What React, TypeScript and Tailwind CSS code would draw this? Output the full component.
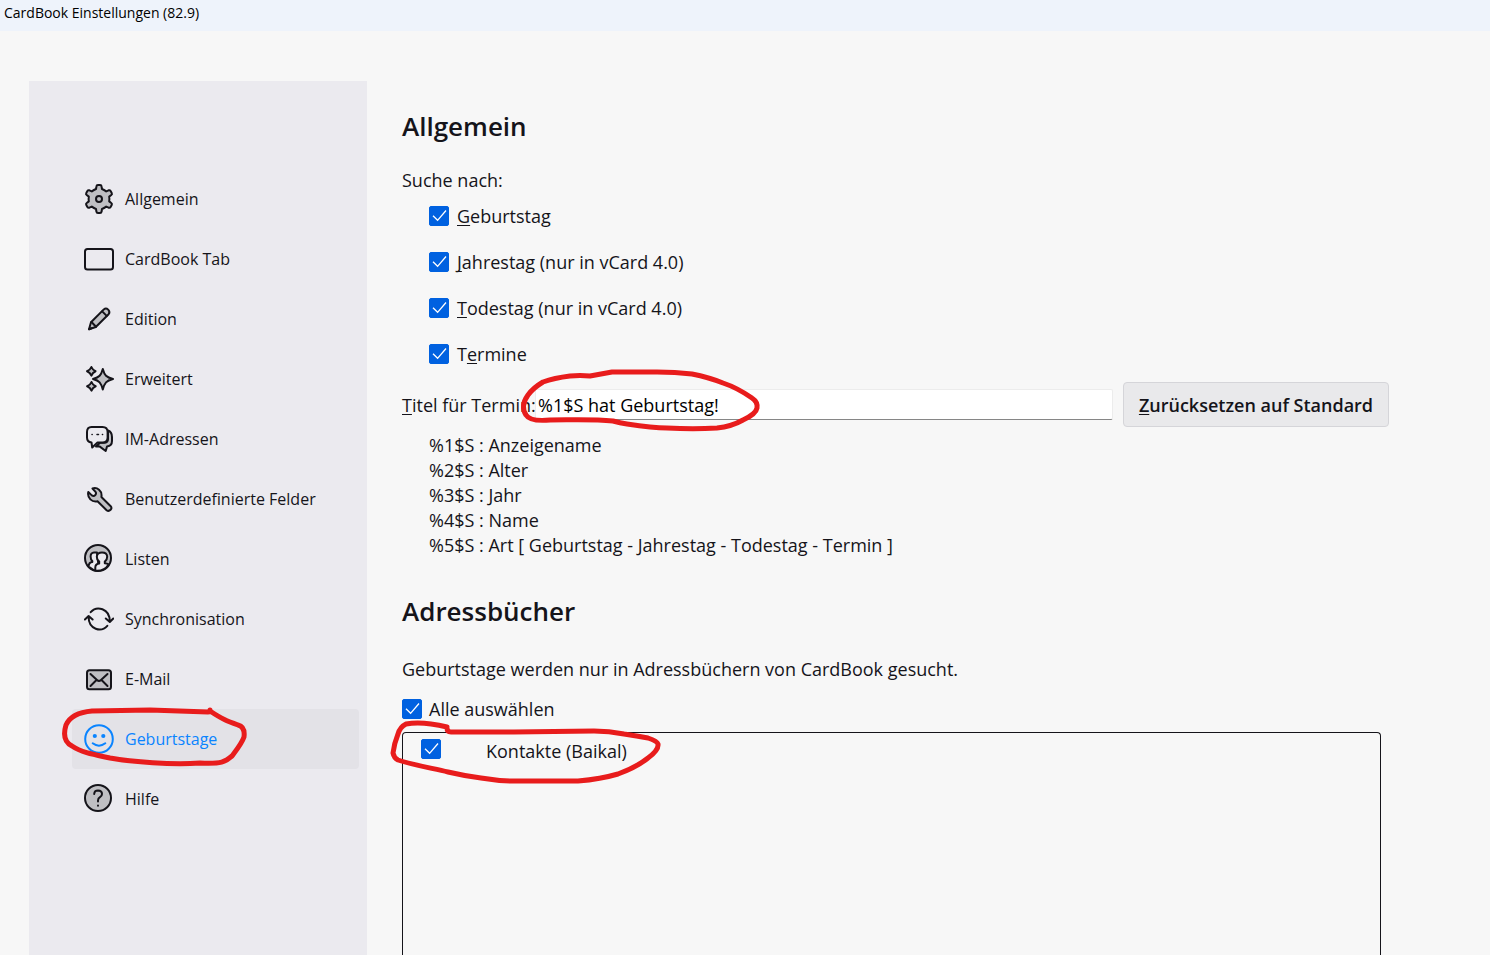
import { useState } from "react";
import type { ReactNode } from "react";

const FILL = "#bfbfc3";

const ICONS: Record<string, ReactNode> = {
  gear: (
    <>
      <path
        fill={FILL}
        d="M12 5L12.4 2.5Q12.6 1 14 1H16Q17.4 1 17.6 2.5L18 5Q20 5.8 22.2 7.4L24.6 6.3Q25.9 5.8 26.6 7L27.7 8.9Q28.4 10.2 27.3 11L25.2 12.6Q25.6 15 25.2 17.4L27.3 19Q28.4 19.8 27.7 21.1L26.6 23Q25.9 24.2 24.6 23.7L22.2 22.6Q20 24.3 18 25L17.6 27.5Q17.4 29 16 29H14Q12.6 29 12.4 27.5L12 25Q10 24.3 7.8 22.6L5.4 23.7Q4.1 24.2 3.4 23L2.3 21.1Q1.6 19.8 2.7 19L4.8 17.4Q4.4 15 4.8 12.6L2.7 11Q1.6 10.2 2.3 8.9L3.4 7Q4.1 5.8 5.4 6.3L7.8 7.4Q10 5.8 12 5Z"
      />
      <circle cx="15" cy="15" r="3" />
    </>
  ),
  tab: <rect x="1" y="5" width="28" height="20.5" rx="2.5" />,
  pencil: (
    <>
      <path fill={FILL} d="M5 25.2L7 18.2L19.8 5.4Q22 3.5 24.2 5.6Q26.4 7.9 24.6 10.2L11.8 23Z" />
      <path d="M7.5 18L12 22.7M18.2 7.4L22.7 11.9" />
      <path d="M5 25.2l2.5-1" />
    </>
  ),
  sparkle: (
    <>
      <path fill={FILL} d="M18.8 5C20.6 11.6 22.2 13.2 29 15C22.2 16.8 20.6 18.6 18.8 25.6C17 18.6 15.4 16.8 9 15C15.4 13.2 17 11.6 18.8 5Z" />
      <path fill={FILL} d="M7.4 3Q8.6 6 11.6 7.2Q8.6 8.4 7.4 11.6Q6.2 8.4 3 7.2Q6.2 6 7.4 3Z" />
      <path fill={FILL} d="M7.5 18Q8.7 21.1 11.7 22.3Q8.7 23.5 7.5 26.6Q6.3 23.5 3.1 22.3Q6.3 21.1 7.5 18Z" />
    </>
  ),
  chat: (
    <>
      <path fill={FILL} d="M24 6.5Q28 8 28 13V17Q28 21.8 23 22.6L21.7 27L15.5 22.4H12L16 18.8H20Q24 18.8 24 15Z" />
      <path fill="#ebeaef" d="M7.5 3H18.5Q23.6 3 23.6 8V13.5Q23.6 18.5 18.5 18.5H13.5L8.2 23.5L7.5 18.5Q3 18 3 13.5V8Q3 3 7.5 3Z" />
      <path strokeWidth="1.5" d="M8 10.5h.2M13 10.5h1.5M18.4 10.5h.2" />
    </>
  ),
  wrench: (
    <path
      fill={FILL}
      d="M8.5 4.5C13 3 18.5 6.5 17.4 13L26.7 22.2Q28.2 24 26.6 25.8Q24.6 27.8 22.6 26.2L13.5 17.3C8 18.5 3 14 4.3 8L7.8 11.4Q9.8 12.6 11.3 11Q12.6 9.5 11.5 7.8Z"
    />
  ),
  people: (
    <>
      <circle cx="14" cy="14" r="13" fill={FILL} />
      <path fill="#ebeaef" d="M4.6 22.5Q4.8 18.4 8.3 18V17Q6.6 15.6 6.6 12.6Q6.6 8.8 10 8.6H13L15 26L10 26.3Z" />
      <path
        fill="#ebeaef"
        d="M11.3 26.6V23.4Q11.3 20 15.2 19.4V17.6Q12.8 15.8 12.8 12.8Q13.2 8.6 18 8.6Q23 8.6 23.2 12.8Q23.2 15.8 20.8 17.6V19.2Q23 19.4 24.6 20.4Q20.5 27.4 11.3 26.6Z"
      />
    </>
  ),
  sync: (
    <>
      <path d="M6.7 8.2C12.5 1.5 25.8 4 25.8 17.6M21.8 14.5L25.8 18L29.3 14.5" />
      <path d="M23.3 21.8C17.5 28.5 4.4 26 4.6 12.5M.9 15.5L4.6 12L8.6 15.5" />
    </>
  ),
  mail: (
    <>
      <rect x="3" y="6.3" width="24" height="19" rx="2.5" fill={FILL} />
      <path d="M6.5 10L13 16Q15 17.8 17 16L23.5 10M6.5 22L12 16.5M23.5 22L18 16.5" />
    </>
  ),
  smile: (
    <>
      <circle cx="15" cy="15" r="13.8" />
      <circle cx="10.8" cy="12" r="1.1" fill="currentColor" />
      <circle cx="19.3" cy="12" r="1.1" fill="currentColor" />
      <path d="M8.7 19.3Q15 24 21.3 19.3" />
    </>
  ),
  help: (
    <>
      <circle cx="14" cy="14" r="13" fill={FILL} />
      <path d="M10.2 10Q10.4 6.6 14 6.6Q18 6.8 18 10Q18 12 16 13.2Q14 14.4 14 16.6V17.4M14 21.6v.2" />
    </>
  ),
};

const NAV_ITEMS = [
  { label: "Allgemein", icon: "gear" },
  { label: "CardBook Tab", icon: "tab" },
  { label: "Edition", icon: "pencil" },
  { label: "Erweitert", icon: "sparkle" },
  { label: "IM-Adressen", icon: "chat" },
  { label: "Benutzerdefinierte Felder", icon: "wrench" },
  { label: "Listen", icon: "people" },
  { label: "Synchronisation", icon: "sync" },
  { label: "E-Mail", icon: "mail" },
  { label: "Geburtstage", icon: "smile" },
  { label: "Hilfe", icon: "help" },
];

// before / key / after: "key" is the underlined access key
const SEARCH_OPTIONS = [
  { id: "birthday", before: "", accessKey: "G", after: "eburtstag" },
  { id: "anniversary", before: "", accessKey: "J", after: "ahrestag (nur in vCard 4.0)" },
  { id: "deathday", before: "", accessKey: "T", after: "odestag (nur in vCard 4.0)" },
  { id: "events", before: "T", accessKey: "e", after: "rmine" },
];

const PLACEHOLDERS = [
  "%1$S : Anzeigename",
  "%2$S : Alter",
  "%3$S : Jahr",
  "%4$S : Name",
  "%5$S : Art [ Geburtstag - Jahrestag - Todestag - Termin ]",
];

function Key({ children }: { children: ReactNode }) {
  return (
    <span className="underline decoration-1 underline-offset-2 [text-decoration-skip-ink:none]">{children}</span>
  );
}

// Hand drawn red marker, placed over its parent
function Marker({ d }: { d: string }) {
  return (
    <svg
      className="absolute left-0 top-0 z-10 w-full h-full overflow-visible pointer-events-none"
      fill="none"
      stroke="#e81c1c"
      strokeWidth="5"
      strokeLinecap="round"
      strokeLinejoin="round"
      aria-hidden="true"
    >
      <path d={d} />
    </svg>
  );
}

function Checkbox({ id }: { id: string }) {
  const [checked, setChecked] = useState(true);
  return (
    <span className="relative block w-5 h-5 shrink-0">
      <input
        id={id}
        type="checkbox"
        checked={checked}
        onChange={(e) => setChecked(e.target.checked)}
        className="block appearance-none w-5 h-5 rounded-xs border border-[#8f8f9d] bg-white checked:bg-[#0061e0] checked:border-[#0061e0]"
      />
      {checked && (
        <svg className="absolute inset-0 w-5 h-5 pointer-events-none" viewBox="0 0 20 20" fill="none">
          <path d="M4 9.7L8.6 14.3L17 4.5" stroke="#fff" strokeWidth="1.3" />
        </svg>
      )}
    </span>
  );
}

function Sidebar() {
  const [active, setActive] = useState("Geburtstage");
  return (
    <nav className="w-[338px] shrink-0 bg-[#ebeaef] pt-[88px] pl-[43px] pr-2">
      {NAV_ITEMS.map((item) => (
        <button
          key={item.label}
          type="button"
          onClick={() => setActive(item.label)}
          className={`relative w-full h-[60px] pl-3 flex items-center gap-[11px] rounded text-base text-left whitespace-nowrap ${
            active === item.label ? "bg-[#e3e2e7] text-[#0a84ff]" : "text-[#15141a]"
          }`}
        >
          <svg
            className="w-[30px] h-[30px] shrink-0"
            viewBox="0 0 30 30"
            fill="none"
            stroke="currentColor"
            strokeWidth="2"
            strokeLinecap="round"
            strokeLinejoin="round"
          >
            {ICONS[item.icon]}
          </svg>
          {item.label}
          {item.icon === "smile" && (
            <Marker d="M138 1Q138 3 136 3L78 1L20 2C8 3 -2 7 -6 16C-9 26 -8 33 0 37C10 44 24 46 38 49C60 53 100 56 128 54C150 55 153 53 160 47C166 39 170 34 172 28C173 20 170 17 166 16C155 12 150 10 138 2" />
          )}
        </button>
      ))}
    </nav>
  );
}

export default function App() {
  const [title, setTitle] = useState("%1$S hat Geburtstag!");

  return (
    <div className="h-screen overflow-hidden flex flex-col bg-[#f7f7f7] text-[#15141a] font-['Open_Sans','Noto_Sans',sans-serif]">
      <header className="h-[31px] shrink-0 px-1 pt-[3px] bg-[#eef3fb] text-black text-sm leading-5">
        CardBook Einstellungen (82.9)
      </header>

      <div className="flex-1 min-h-0 flex pt-[50px] pl-[29px] pr-[101px]">
        <Sidebar />

        <main className="flex-1 min-w-0 ml-[35px] pt-[25px] flex flex-col text-lg leading-6">
          <h2 className="text-[26px] leading-10 font-semibold">Allgemein</h2>
          <p className="mt-[22px]">Suche nach:</p>

          <div className="mt-px">
            {SEARCH_OPTIONS.map((opt) => (
              <div key={opt.id} className="h-[46px] pl-[27px] flex items-center gap-2">
                <Checkbox id={opt.id} />
                <label htmlFor={opt.id}>
                  {opt.before}
                  <Key>{opt.accessKey}</Key>
                  {opt.after}
                </label>
              </div>
            ))}
          </div>

          {/* Event title */}
          <div className="relative mt-[5px] h-[45px] shrink-0 flex items-center">
            <label htmlFor="event-title" className="w-[133px] shrink-0 whitespace-nowrap">
              <Key>T</Key>itel für Termin:
            </label>
            <input
              id="event-title"
              type="text"
              value={title}
              onChange={(e) => setTitle(e.target.value)}
              className="flex-1 min-w-0 h-[31px] px-0.5 bg-white text-black border border-[#ececec] border-b-[#868686] rounded-xs outline-none"
            />
            <button
              type="button"
              className="ml-[10px] w-[266px] h-[45px] shrink-0 rounded border border-[#d5d5d9] bg-[#e9e9eb] font-semibold whitespace-nowrap"
            >
              <Key>Z</Key>urücksetzen auf Standard
            </button>
            <Marker d="M126 13C121 20 120 27 124 33C127 38 137 39 148 38C170 38 190 37 211 39Q218 41 225 42C238 44 252 46 265 46C282 47 300 47 315 46C325 45 334 42 341 38Q354 32 355 26Q356 20 350 16C340 9 333 5 321 1C311 -3 300 -6 290 -8Q273 -10 255 -10L210 -10Q199 -8 188 -6Q178 -7 168 -6Q152 -4 141 0Q131 6 126 13Z" />
          </div>

          <ul className="mt-[6px] pl-[27px] leading-[25px]">
            {PLACEHOLDERS.map((line) => (
              <li key={line}>{line}</li>
            ))}
          </ul>

          <h2 className="mt-[33px] text-[26px] leading-10 font-semibold">Adressbücher</h2>
          <p className="mt-[26px]">Geburtstage werden nur in Adressbüchern von CardBook gesucht.</p>

          <div className="mt-[9px] h-[38px] shrink-0 flex items-center gap-[7px]">
            <Checkbox id="select-all" />
            <label htmlFor="select-all">Alle auswählen</label>
          </div>

          {/* Address book list */}
          <div className="relative mt-1 mr-2 flex-1 border border-b-0 border-[#15141a] rounded-t">
            <div className="h-8 pl-[18px] flex items-center gap-[45px]">
              <Checkbox id="book-baikal" />
              <label htmlFor="book-baikal" className="pt-1">
                Kontakte (Baikal)
              </label>
            </div>
            <Marker d="M44 -6Q36 -8 28 -9Q14 -11 3 -9Q-3 -6 -5 1Q-9 11 -10 20Q-9 25 -5 27C10 32 28 35 45 39Q62 43 78 45Q96 48 111 48L175 48Q198 46 215 41Q234 34 245 25Q256 17 255 11Q254 8 245 5Q234 3 221 1Q206 -2 191 -2L111 -1L48 -1Q44 -1 44 -5" />
          </div>
        </main>
      </div>
    </div>
  );
}
